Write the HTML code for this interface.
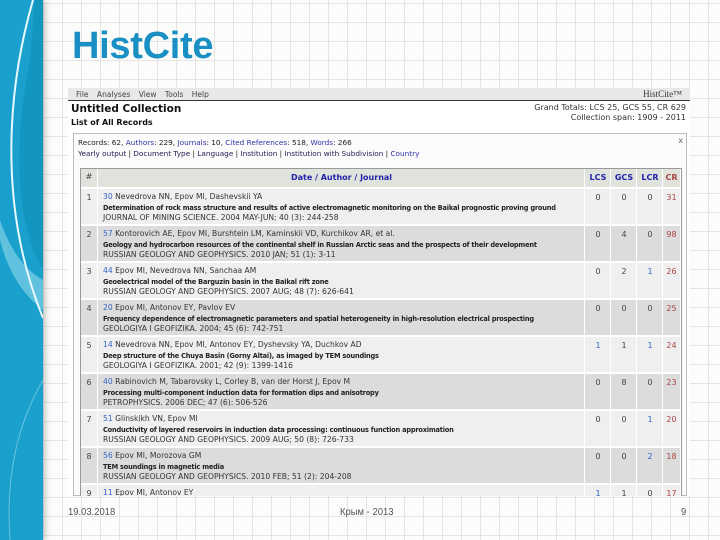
<!DOCTYPE html>
<html><head><meta charset="utf-8"><style>
*{margin:0;padding:0;box-sizing:border-box}
body{width:720px;height:540px;overflow:hidden;position:relative;font-family:"Liberation Sans",sans-serif;
background-color:#fcfcfa;
background-image:linear-gradient(#e4e4e4 1px,transparent 1px),linear-gradient(90deg,#e4e4e4 1px,transparent 1px);
background-size:19px 19px;background-position:5px 3px}
.strip{position:absolute;left:0;top:0;width:43px;height:540px;background:#1aa0cc;overflow:hidden;box-shadow:3px 0 6px rgba(0,0,0,.2)}
.title{position:absolute;left:72px;top:25px;font-size:38px;font-weight:bold;color:#1a8fc4;letter-spacing:-0.3px}
.shot{position:absolute;left:68px;top:88px;width:622px;height:408px;background:#fff;overflow:hidden;font-family:"DejaVu Sans",sans-serif}
.menu{position:absolute;left:0;top:0;width:622px;height:13px;background:#e8e8e8;border-bottom:1px solid #333;font-size:7.5px;color:#444;padding:2px 8px;word-spacing:6px}
.logo{position:absolute;right:8px;top:1px;font-family:"Liberation Serif",serif;font-size:9px;color:#333;word-spacing:0}
.h1{position:absolute;left:3px;top:15px;font-size:10.5px;font-weight:bold;color:#111}
.h2{position:absolute;left:3px;top:30px;font-size:8px;font-weight:bold;color:#111}
.gt{position:absolute;right:4px;top:15px;font-size:8px;color:#333;text-align:right;line-height:10px}
.box{position:absolute;left:5px;top:45px;width:614px;height:363px;border:1px solid #bbb;background:#fbfbfb}
.info{position:absolute;left:4px;top:3px;font-size:7.3px;color:#222;line-height:11px}
.info a{color:#225;text-decoration:none}
.info .b{color:#33a}
.x{position:absolute;right:3px;top:2px;font-size:8px;color:#666}
.tbl{position:absolute;left:6px;top:34px;width:602px;height:330px;border:1px solid #999;background:#fff}
.row{position:absolute;left:0;width:600px;height:36px}
.c{position:absolute;top:0;height:100%;border-right:1px solid #fff}
.n{left:0;width:17px;text-align:center;font-size:8px;color:#444;padding-top:4px}
.m{left:18px;width:486px;padding:3px 4px;font-size:7.6px;color:#333;line-height:10.5px;white-space:nowrap;overflow:hidden}
.m .t{font-size:6.6px;font-weight:bold;color:#222;letter-spacing:-0.2px}
.m a{color:#36c}
.v{width:25px;text-align:center;font-size:8px;color:#444;padding-top:4px}
.blue{color:#36c}.red{color:#a44}
.ft{position:absolute;top:506px;font-size:10.5px;color:#555;transform:scaleX(.9);transform-origin:left}
</style></head><body>
<div class="strip">
<svg width="43" height="540" viewBox="0 0 43 540">
<path d="M0 0 L43 0 L43 270 C20 230 10 160 30 60 L35 0Z" fill="#0e8fb8" opacity=".6"/>
<path d="M0 240 C10 280 30 300 43 310 L43 280 C25 270 10 250 0 220Z" fill="#7fd0e6" opacity=".7"/>
<path d="M33 0 C10 80 -5 200 43 318" stroke="#e8f8ff" stroke-width="2" fill="none"/>
<path d="M43 380 C20 420 5 470 10 540" stroke="#9fdcee" stroke-width="1" fill="none" opacity=".6"/>
</svg>
</div>
<div class="title">HistCite</div>
<div class="shot">
<div class="menu">File Analyses View Tools Help<span class="logo">HistCite™</span></div>
<div class="h1">Untitled Collection</div>
<div class="h2">List of All Records</div>
<div class="gt">Grand Totals: LCS 25, GCS 55, CR 629<br>Collection span: 1909 - 2011</div>
<div class="box">
<div class="info">Records: 62, <span class="b">Authors</span>: 229, <span class="b">Journals</span>: 10, <span class="b">Cited References</span>: 518, <span class="b">Words</span>: 266<br><a>Yearly output</a> | <a>Document Type</a> | <a>Language</a> | <a>Institution</a> | <a>Institution with Subdivision</a> | <span class="b">Country</span></div>
<div class="x">x</div>
<div class="tbl">
<div class="row" style="top:0;height:18px;background:#dfe3dc">
<div class="c n" style="padding-top:3px">#</div>
<div class="c m" style="text-align:center;font-weight:bold;color:#22a;font-size:8px;padding-top:4px">Date / Author / Journal</div>
<div class="c v" style="left:505px;font-weight:bold;color:#22a;padding-top:4px">LCS</div>
<div class="c v" style="left:531px;font-weight:bold;color:#22a;padding-top:4px">GCS</div>
<div class="c v" style="left:557px;font-weight:bold;color:#22a;padding-top:4px">LCR</div>
<div class="c v" style="left:582px;width:18px;font-weight:bold;color:#a44;padding-top:4px">CR</div>
</div>
</div>
</div>
</div>
<script>
var d=[
["1","30","Nevedrova NN, Epov MI, Dashevskii YA","Determination of rock mass structure and results of active electromagnetic monitoring on the Baikal prognostic proving ground","JOURNAL OF MINING SCIENCE. 2004 MAY-JUN; 40 (3): 244-258","0","0","0","31"],
["2","57","Kontorovich AE, Epov MI, Burshtein LM, Kaminskii VD, Kurchikov AR, et al.","Geology and hydrocarbon resources of the continental shelf in Russian Arctic seas and the prospects of their development","RUSSIAN GEOLOGY AND GEOPHYSICS. 2010 JAN; 51 (1): 3-11","0","4","0","98"],
["3","44","Epov MI, Nevedrova NN, Sanchaa AM","Geoelectrical model of the Barguzin basin in the Baikal rift zone","RUSSIAN GEOLOGY AND GEOPHYSICS. 2007 AUG; 48 (7): 626-641","0","2","1","26"],
["4","20","Epov MI, Antonov EY, Pavlov EV","Frequency dependence of electromagnetic parameters and spatial heterogeneity in high-resolution electrical prospecting","GEOLOGIYA I GEOFIZIKA. 2004; 45 (6): 742-751","0","0","0","25"],
["5","14","Nevedrova NN, Epov MI, Antonov EY, Dyshevsky YA, Duchkov AD","Deep structure of the Chuya Basin (Gorny Altai), as imaged by TEM soundings","GEOLOGIYA I GEOFIZIKA. 2001; 42 (9): 1399-1416","1","1","1","24"],
["6","40","Rabinovich M, Tabarovsky L, Corley B, van der Horst J, Epov M","Processing multi-component induction data for formation dips and anisotropy","PETROPHYSICS. 2006 DEC; 47 (6): 506-526","0","8","0","23"],
["7","51","Glinskikh VN, Epov MI","Conductivity of layered reservoirs in induction data processing: continuous function approximation","RUSSIAN GEOLOGY AND GEOPHYSICS. 2009 AUG; 50 (8): 726-733","0","0","1","20"],
["8","56","Epov MI, Morozova GM","TEM soundings in magnetic media","RUSSIAN GEOLOGY AND GEOPHYSICS. 2010 FEB; 51 (2): 204-208","0","0","2","18"],
["9","11","Epov MI, Antonov EY","Efficiency of electromagnetic soundings in high-resolution electrical prospecting of sedimentary basins","GEOLOGIYA I GEOFIZIKA. 2000","1","1","0","17"]];
var t=document.querySelector('.tbl'),h='';
d.forEach(function(r,i){
var bg=i%2?'#dcdcdc':'#efefef',top=19+i*37;
h+='<div class="row" style="top:'+top+'px;background:'+bg+';border-top:1px solid #fff">'+
'<div class="c n">'+r[0]+'</div><div class="c m"><a>'+r[1]+'</a> '+r[2]+'<br><span class="t">'+r[3]+'</span><br>'+r[4]+'</div>';
var L=[505,531,557,582];
for(var k=0;k<4;k++){var cls=(k==3?'red':((k==2||k==0)&&r[5+k]!="0"?'blue':''));
h+='<div class="c v '+cls+'" style="left:'+L[k]+'px'+(k==3?';width:18px':'')+'">'+r[5+k]+'</div>';}
h+='</div>';});
t.innerHTML+=h;
</script>
<div class="ft" style="left:68px">19.03.2018</div>
<div class="ft" style="left:340px">Крым - 2013</div>
<div class="ft" style="left:681px">9</div>
</body></html>
